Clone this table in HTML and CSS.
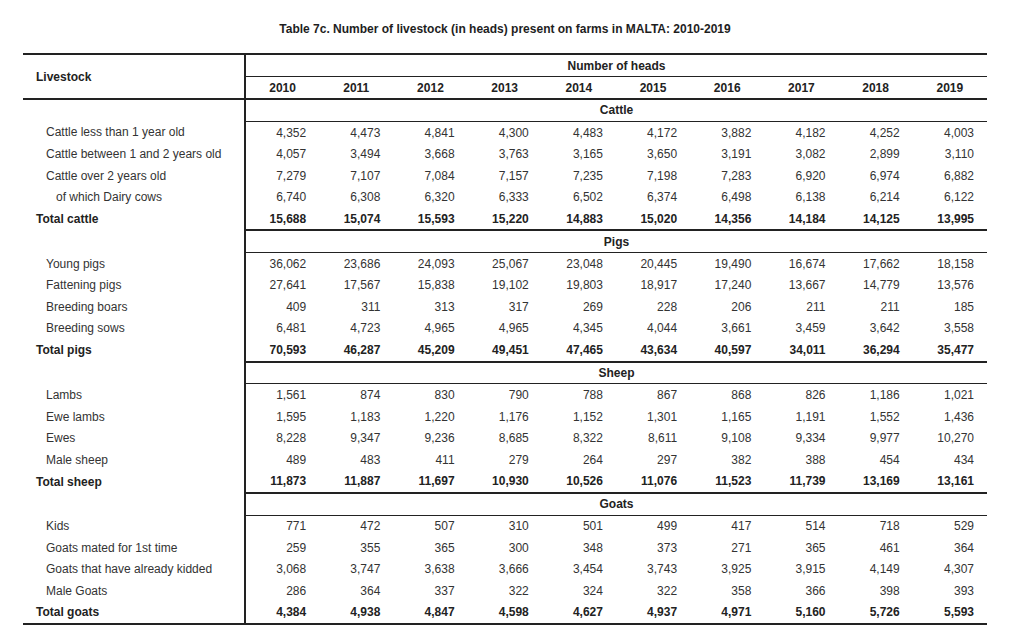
FILE: index.html
```html
<!DOCTYPE html>
<html lang="en">
<head>
<meta charset="utf-8">
<title>Table 7c</title>
<link rel="stylesheet" href="styles.css">
</head>
<body>
<div class="page">
  <h1 class="title">Table 7c. Number of livestock (in heads) present on farms in MALTA: 2010-2019</h1>
  <table class="stats">
    <colgroup>
      <col class="c-label">
      <col class="c-num"><col class="c-num"><col class="c-num"><col class="c-num"><col class="c-num">
      <col class="c-num"><col class="c-num"><col class="c-num"><col class="c-num"><col class="c-num">
    </colgroup>
    <thead>
      <tr class="h1">
        <th class="lab" rowspan="2">Livestock</th>
        <th class="grp" colspan="10">Number of heads</th>
      </tr>
      <tr class="h2">
        <th>2010</th><th>2011</th><th>2012</th><th>2013</th><th>2014</th>
        <th>2015</th><th>2016</th><th>2017</th><th>2018</th><th>2019</th>
      </tr>
    </thead>
    <tbody>
      <tr class="sec"><td class="lab"></td><td colspan="10">Cattle</td></tr>
      <tr><td class="lab i1">Cattle less than 1 year old</td><td>4,352</td><td>4,473</td><td>4,841</td><td>4,300</td><td>4,483</td><td>4,172</td><td>3,882</td><td>4,182</td><td>4,252</td><td>4,003</td></tr>
      <tr><td class="lab i1">Cattle between 1 and 2 years old</td><td>4,057</td><td>3,494</td><td>3,668</td><td>3,763</td><td>3,165</td><td>3,650</td><td>3,191</td><td>3,082</td><td>2,899</td><td>3,110</td></tr>
      <tr><td class="lab i1">Cattle over 2 years old</td><td>7,279</td><td>7,107</td><td>7,084</td><td>7,157</td><td>7,235</td><td>7,198</td><td>7,283</td><td>6,920</td><td>6,974</td><td>6,882</td></tr>
      <tr><td class="lab i2">of which Dairy cows</td><td>6,740</td><td>6,308</td><td>6,320</td><td>6,333</td><td>6,502</td><td>6,374</td><td>6,498</td><td>6,138</td><td>6,214</td><td>6,122</td></tr>
      <tr class="tot"><td class="lab">Total cattle</td><td>15,688</td><td>15,074</td><td>15,593</td><td>15,220</td><td>14,883</td><td>15,020</td><td>14,356</td><td>14,184</td><td>14,125</td><td>13,995</td></tr>

      <tr class="sec"><td class="lab"></td><td colspan="10">Pigs</td></tr>
      <tr><td class="lab i1">Young pigs</td><td>36,062</td><td>23,686</td><td>24,093</td><td>25,067</td><td>23,048</td><td>20,445</td><td>19,490</td><td>16,674</td><td>17,662</td><td>18,158</td></tr>
      <tr><td class="lab i1">Fattening pigs</td><td>27,641</td><td>17,567</td><td>15,838</td><td>19,102</td><td>19,803</td><td>18,917</td><td>17,240</td><td>13,667</td><td>14,779</td><td>13,576</td></tr>
      <tr><td class="lab i1">Breeding boars</td><td>409</td><td>311</td><td>313</td><td>317</td><td>269</td><td>228</td><td>206</td><td>211</td><td>211</td><td>185</td></tr>
      <tr><td class="lab i1">Breeding sows</td><td>6,481</td><td>4,723</td><td>4,965</td><td>4,965</td><td>4,345</td><td>4,044</td><td>3,661</td><td>3,459</td><td>3,642</td><td>3,558</td></tr>
      <tr class="tot"><td class="lab">Total pigs</td><td>70,593</td><td>46,287</td><td>45,209</td><td>49,451</td><td>47,465</td><td>43,634</td><td>40,597</td><td>34,011</td><td>36,294</td><td>35,477</td></tr>

      <tr class="sec"><td class="lab"></td><td colspan="10">Sheep</td></tr>
      <tr><td class="lab i1">Lambs</td><td>1,561</td><td>874</td><td>830</td><td>790</td><td>788</td><td>867</td><td>868</td><td>826</td><td>1,186</td><td>1,021</td></tr>
      <tr><td class="lab i1">Ewe lambs</td><td>1,595</td><td>1,183</td><td>1,220</td><td>1,176</td><td>1,152</td><td>1,301</td><td>1,165</td><td>1,191</td><td>1,552</td><td>1,436</td></tr>
      <tr><td class="lab i1">Ewes</td><td>8,228</td><td>9,347</td><td>9,236</td><td>8,685</td><td>8,322</td><td>8,611</td><td>9,108</td><td>9,334</td><td>9,977</td><td>10,270</td></tr>
      <tr><td class="lab i1">Male sheep</td><td>489</td><td>483</td><td>411</td><td>279</td><td>264</td><td>297</td><td>382</td><td>388</td><td>454</td><td>434</td></tr>
      <tr class="tot"><td class="lab">Total sheep</td><td>11,873</td><td>11,887</td><td>11,697</td><td>10,930</td><td>10,526</td><td>11,076</td><td>11,523</td><td>11,739</td><td>13,169</td><td>13,161</td></tr>

      <tr class="sec"><td class="lab"></td><td colspan="10">Goats</td></tr>
      <tr><td class="lab i1">Kids</td><td>771</td><td>472</td><td>507</td><td>310</td><td>501</td><td>499</td><td>417</td><td>514</td><td>718</td><td>529</td></tr>
      <tr><td class="lab i1">Goats mated for 1st time</td><td>259</td><td>355</td><td>365</td><td>300</td><td>348</td><td>373</td><td>271</td><td>365</td><td>461</td><td>364</td></tr>
      <tr><td class="lab i1">Goats that have already kidded</td><td>3,068</td><td>3,747</td><td>3,638</td><td>3,666</td><td>3,454</td><td>3,743</td><td>3,925</td><td>3,915</td><td>4,149</td><td>4,307</td></tr>
      <tr><td class="lab i1">Male Goats</td><td>286</td><td>364</td><td>337</td><td>322</td><td>324</td><td>322</td><td>358</td><td>366</td><td>398</td><td>393</td></tr>
      <tr class="tot last"><td class="lab">Total goats</td><td>4,384</td><td>4,938</td><td>4,847</td><td>4,598</td><td>4,627</td><td>4,937</td><td>4,971</td><td>5,160</td><td>5,726</td><td>5,593</td></tr>
    </tbody>
  </table>
</div>
</body>
</html>
```

FILE: styles.css
```css
html, body {
  margin: 0;
  padding: 0;
  background: #ffffff;
}

body {
  font-family: "Liberation Sans", Arial, sans-serif;
  font-size: 12px;
  color: #333;
}

.page {
  width: 1024px;
  height: 634px;
  padding: 0 0 0 23px;
  box-sizing: border-box;
}

.title {
  margin: 0;
  width: 964px;
  height: 53px;
  box-sizing: border-box;
  padding-top: 22px;
  font-size: 12px;
  line-height: 15px;
  font-weight: bold;
  text-align: center;
  color: #1e1e1e;
}

.stats {
  width: 964px;
  table-layout: fixed;
  border-collapse: collapse;
  border-top: 2px solid #222;
}

.c-label { width: 222px; }
.c-num { width: 74.2px; }

.stats th,
.stats td {
  padding: 0 13px 0 0;
  text-align: right;
  white-space: nowrap;
  line-height: 14px;
  vertical-align: middle;
}

.stats .lab {
  text-align: left;
  padding: 0 0 0 13px;
  border-right: 2px solid #222;
}

.stats th {
  font-weight: bold;
  color: #222;
}

.h1 th { height: 21px; }
.h1 .grp {
  text-align: center;
  padding: 0;
  border-bottom: 1px solid #222;
}

.h2 th {
  height: 21px;
  text-align: center;
  padding: 0;
  border-bottom: 2px solid #222;
}

.stats thead .lab { border-bottom: 2px solid #222; }

.sec td {
  text-align: center;
  padding: 0;
  font-weight: bold;
  color: #222;
  border-top: 2px solid #222;
  border-bottom: 1px solid #222;
}

.sec td.lab {
  border-top: none;
  border-bottom: none;
  padding: 0;
}

.stats tbody tr:first-child td { border-top: none; }

.stats tbody td { height: 21.5px; }
.stats tbody .sec td { height: 20.8px; }

.stats .i1 { padding-left: 23px; }
.stats .i2 { padding-left: 33px; }

.tot td {
  font-weight: bold;
  color: #222;
}

.last td { border-bottom: 2px solid #222; }
```
